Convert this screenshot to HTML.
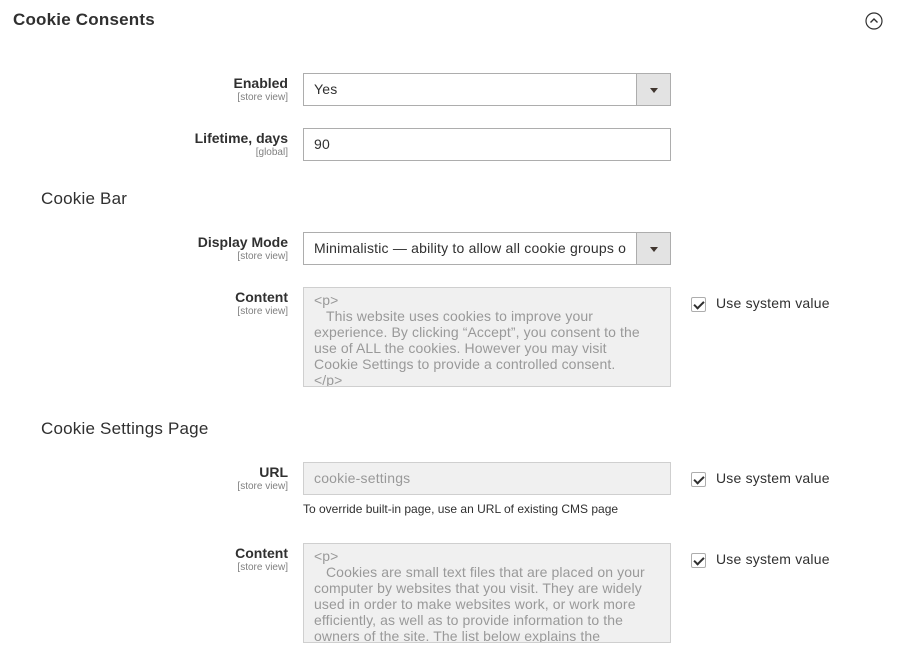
<!DOCTYPE html>
<html><head><style>
*{box-sizing:border-box;margin:0;padding:0}
body{width:903px;height:672px;background:#fff;font-family:"Liberation Sans",sans-serif;color:#303030;position:relative;overflow:hidden}
.a{position:absolute}
.h1{left:13px;top:10px;font-size:17px;font-weight:bold;color:#303030;letter-spacing:0.2px}
.h2{left:41px;font-size:17px;color:#303030;letter-spacing:0.2px}
.lab{right:615px;text-align:right;font-size:14px;font-weight:bold;color:#303030}
.sc{display:block;font-size:10px;font-weight:normal;color:#808080;margin-top:1px}
.in{left:303px;width:368px;height:33px;border:1px solid #adadad;background:#fff;font-size:14px;padding:0 10px;line-height:31px;color:#303030;white-space:nowrap;overflow:hidden;letter-spacing:0.2px}
.sel .arr{position:absolute;right:0;top:0;width:34px;height:31px;background:#e3e3e3;border-left:1px solid #adadad}
.sel .arr:after{content:"";position:absolute;left:13px;top:14px;border:4px solid transparent;border-top:5px solid #41362f;border-bottom:0}
.dis{background:#f0f0f0;border-color:#cfcfcf;color:#999}
.ta{left:303px;width:368px;height:100px;border:1px solid #cfcfcf;background:#f0f0f0;color:#999;font-size:14px;line-height:16px;padding:4px 10px;overflow:hidden;white-space:nowrap;letter-spacing:0.1px}
.cb{left:691px;width:15px;height:15px;border:1px solid #adadad;border-radius:2px;background:#fff}
.cb:after{content:"";position:absolute;left:4px;top:1px;width:4px;height:8px;border:solid #303030;border-width:0 2px 2px 0;transform:rotate(45deg)}
.ct{left:716px;font-size:14px;color:#303030;letter-spacing:0.2px}
.note{left:303px;font-size:12px;color:#303030}
</style></head><body>
<div class="a h1">Cookie Consents</div>
<svg class="a" style="left:865px;top:12px" width="18" height="18" viewBox="0 0 18 18"><circle cx="9" cy="9" r="8" fill="none" stroke="#303030" stroke-width="1.2"/><path d="M5.5 10.5 9 7l3.5 3.5" fill="none" stroke="#303030" stroke-width="1.4"/></svg>

<div class="a lab" style="top:75px">Enabled<span class="sc">[store view]</span></div>
<div class="a in sel" style="top:73px">Yes<span class="arr"></span></div>

<div class="a lab" style="top:130px">Lifetime, days<span class="sc">[global]</span></div>
<div class="a in" style="top:128px">90</div>

<div class="a h2" style="top:189px">Cookie Bar</div>

<div class="a lab" style="top:234px">Display Mode<span class="sc">[store view]</span></div>
<div class="a in sel" style="top:232px">Minimalistic — ability to allow all cookie groups o<span class="arr"></span></div>

<div class="a lab" style="top:289px">Content<span class="sc">[store view]</span></div>
<div class="a ta" style="top:287px">&lt;p&gt;<br>&nbsp;&nbsp;&nbsp;This website uses cookies to improve your<br>experience. By clicking “Accept”, you consent to the<br>use of ALL the cookies. However you may visit<br>Cookie Settings to provide a controlled consent.<br>&lt;/p&gt;</div>
<div class="a cb" style="top:297px"></div>
<div class="a ct" style="top:295px">Use system value</div>

<div class="a h2" style="top:419px">Cookie Settings Page</div>

<div class="a lab" style="top:464px">URL<span class="sc">[store view]</span></div>
<div class="a in dis" style="top:462px">cookie-settings</div>
<div class="a cb" style="top:472px"></div>
<div class="a ct" style="top:470px">Use system value</div>
<div class="a note" style="top:502px">To override built-in page, use an URL of existing CMS page</div>

<div class="a lab" style="top:545px">Content<span class="sc">[store view]</span></div>
<div class="a ta" style="top:543px">&lt;p&gt;<br>&nbsp;&nbsp;&nbsp;Cookies are small text files that are placed on your<br>computer by websites that you visit. They are widely<br>used in order to make websites work, or work more<br>efficiently, as well as to provide information to the<br>owners of the site. The list below explains the</div>
<div class="a cb" style="top:553px"></div>
<div class="a ct" style="top:551px">Use system value</div>
</body></html>
